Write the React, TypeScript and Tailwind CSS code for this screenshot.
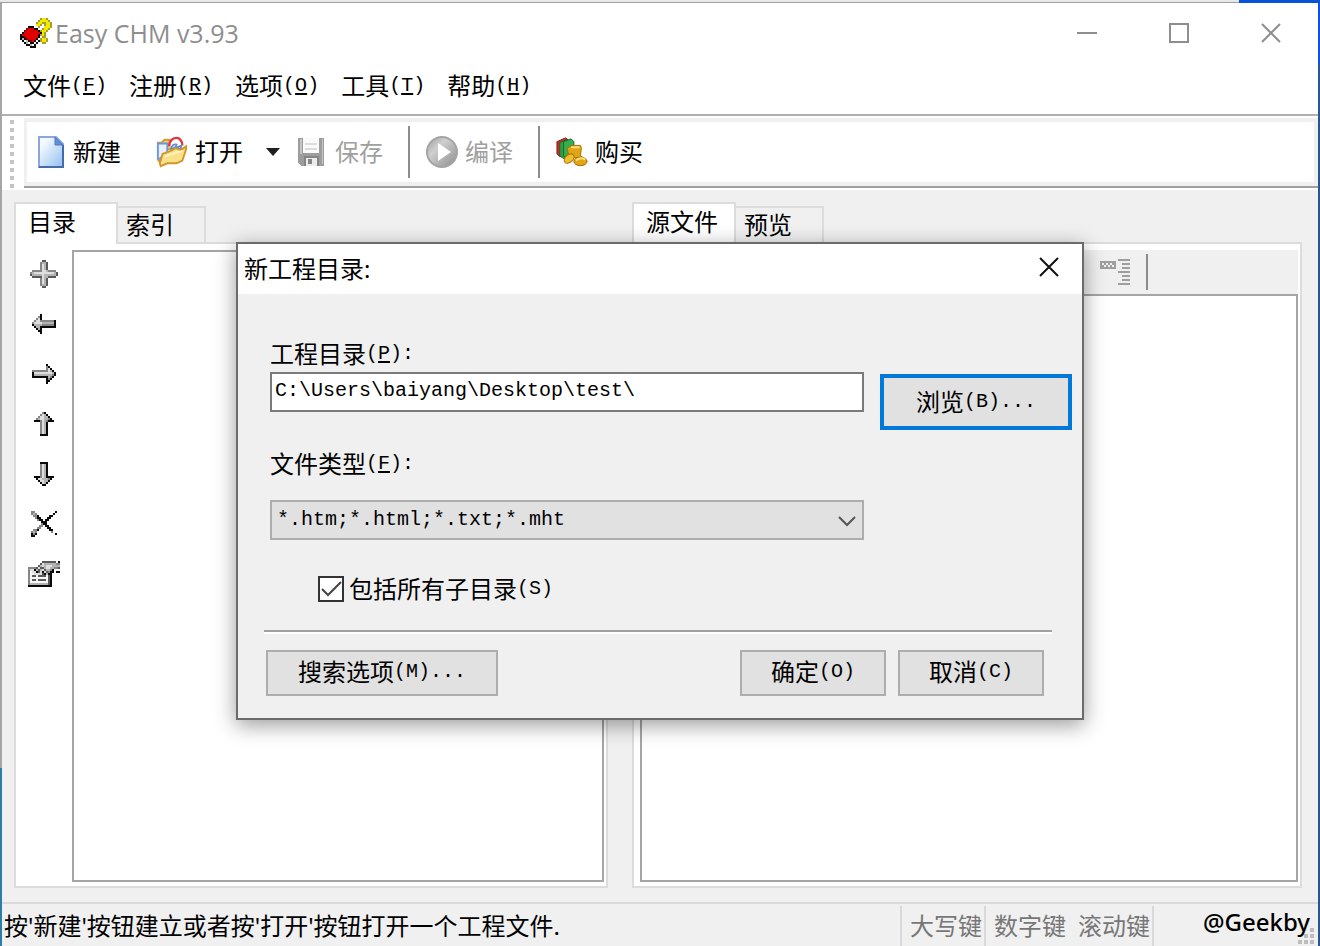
import { useState } from "react"
import type { ReactNode } from "react"
import { clsx } from "clsx"

const palette: Record<string, string> = {
  k: "#0a0a0a",
  d: "#5a5a5a",
  g: "#868686",
  m: "#b4b4b4",
  l: "#dedede",
  w: "#f8f8f8",
  r: "#e00000",
  b: "#8c0000",
  y: "#f2ea00",
  o: "#a39f2a",
}

// Draws a small bitmap, one character per cell, each cell 2px wide
function PixelIcon({ rows }: { rows: string[] }) {
  const width = Math.max(...rows.map((row) => row.length))
  return (
    <svg
      width={width * 2}
      height={rows.length * 2}
      viewBox={`0 0 ${width} ${rows.length}`}
      shapeRendering="crispEdges"
      aria-hidden="true"
    >
      {rows.map((row, y) =>
        row.split("").map((cell, x) =>
          palette[cell] ? <rect key={`${x}-${y}`} x={x} y={y} width="1" height="1" fill={palette[cell]} /> : null,
        ),
      )}
    </svg>
  )
}

const appIcon = [
  "..........oyyo..",
  ".........oyyyyo.",
  "........oyyooyyo",
  "........yyo.oyyo",
  "....kkk..o..yyyo",
  "...brrrkk..oyyo.",
  "..brrrrrrkoyyo..",
  ".krrrrrrrrkyo...",
  "krrrrrrrrkoyo...",
  "kkbrrrrrrk.oo...",
  "kmkbrrrrkwoyyo..",
  ".kwmkbrkwkoyyo..",
  "..kmwkkwk..oo...",
  "...kkmwk........",
  ".....kkk........",
]

const treeTools = [
  {
    label: "添加",
    rows: [
      "......dd......",
      ".....gmmd.....",
      ".....glmd.....",
      ".....glmd.....",
      ".....glmd.....",
      ".gggggllmgggg.",
      "gmllllllllllmd",
      "dmmmmmlmmmmmmd",
      ".dddddlmmdddd.",
      ".....glmd.....",
      ".....glmd.....",
      ".....glmd.....",
      ".....gmmd.....",
      "......dd......",
    ],
  },
  {
    label: "左移",
    rows: [
      "....k.......",
      "...gk.......",
      "..glk.......",
      ".gllgggggggk",
      "gllllmmmmmmk",
      "kmmmmggggggk",
      ".kmmkkkkkkkk",
      "..kmk.......",
      "...kk.......",
      "....k.......",
    ],
  },
  {
    label: "右移",
    rows: [
      ".......k....",
      ".......gk...",
      ".......glk..",
      "gggggggglmk.",
      "klllllllllmk",
      "kmmmmmmmmmgk",
      "kkkkkkkkmgk.",
      ".......kgk..",
      ".......kk...",
      ".......k....",
    ],
  },
  {
    label: "上移",
    rows: [
      "....gk....",
      "...glmk...",
      "..gllmmk..",
      ".gmllmmgk.",
      "kkkglmgkkk",
      "...glmk...",
      "...glmk...",
      "...glmk...",
      "...glmk...",
      "...glmk...",
      "...glmk...",
      "...kkkk...",
    ],
  },
  {
    label: "下移",
    rows: [
      "...kkkk...",
      "...glmk...",
      "...glmk...",
      "...glmk...",
      "...glmk...",
      "...glmk...",
      "...glmk...",
      "kkkglmkkkk",
      ".kllmmmgk.",
      "..kllmmk..",
      "...klmk...",
      "....kk....",
    ],
  },
  {
    label: "删除",
    rows: [
      "gg..........k",
      "gmg........k.",
      ".ggk.....kk..",
      "..gkk...kk...",
      "...gkk.kk....",
      ".....kkk.....",
      ".....gkk.....",
      "....gg.kk....",
      "...gg...kk...",
      ".ggk.....kk..",
      "gmg.......g..",
      "kgk.........k",
      "kk...........",
    ],
  },
  {
    label: "属性",
    rows: [
      ".......ddddddd.k",
      "......dlmmmmmmgg",
      ".....dmlmlllmmmm",
      "ggggdlddmllmmggd",
      "gllkmdmldmmgk...",
      "gwllkdlkldgkk.kk",
      "gwwlllldkmkk....",
      "gwddwddddwdk....",
      "gwwwwwwwwwdk....",
      "gwddwddddwdk....",
      "gwwwwwwwwwdk....",
      "gmmmmmmmmmdk....",
      "kkkkkkkkkkkk....",
    ],
  },
]

function NewIcon() {
  return (
    <svg width="32" height="32" viewBox="0 0 32 32" aria-hidden="true">
      <defs>
        <linearGradient id="page" x1="0" y1="0" x2="1" y2="1">
          <stop offset="0.2" stopColor="#f4f9ff" />
          <stop offset="1" stopColor="#8fc0f0" />
        </linearGradient>
      </defs>
      <path d="M5 1H22L29 8V31H5Z" fill="url(#page)" stroke="#8ba6d8" strokeWidth="2" />
      <path d="M29 9V31H5" fill="none" stroke="#4a68ae" strokeWidth="2" />
      <path d="M21 1L29 9H21Z" fill="#5f8fdc" stroke="#4f78c4" />
    </svg>
  )
}

function OpenIcon() {
  return (
    <svg width="34" height="32" viewBox="0 0 34 32" aria-hidden="true">
      <path d="M2 6H6L9 3H14L17 6H26V13H10L4 27L2 24Z" fill="#f3cf6a" stroke="#d19a2e" strokeWidth="2" />
      <path d="M2 7H12V17L4 23H2Z" fill="#e6f0ff" stroke="#6e96dc" strokeWidth="2" />
      <path d="M14 10C14 3 19 1 22 1S28 4 28 9" fill="#fff" stroke="#e5333d" strokeWidth="2.5" />
      <path d="M16 12C17 8 20 7 22 8L20 12ZM22 11L27 9L26 13Z" fill="#b9d0f5" stroke="#5d86cf" strokeWidth="1.5" />
      <path d="M7 18L15 15L21 12L26 14L32 10V13L28 25L22 28H12L5 31L4 28Z" fill="#fbe08a" stroke="#cf962a" strokeWidth="2" />
      <path d="M9 21L17 18L23 16L28 15" fill="none" stroke="#fff3bd" strokeWidth="2" />
    </svg>
  )
}

function SaveIcon() {
  return (
    <svg width="32" height="32" viewBox="0 0 32 32" shapeRendering="crispEdges" aria-hidden="true">
      <path d="M2 2H28V30H6L2 27Z" fill="#9d9d9d" />
      <path d="M4 3H6V18H4ZM26 3H27V28H26Z" fill="#c6c6c6" />
      <path d="M7 2H23V17H7Z" fill="#fafafa" />
      <path d="M9 7H21V9H9ZM9 12H21V14H9Z" fill="#dcdcdc" />
      <path d="M8 20H23V30H8Z" fill="#858585" />
      <path d="M10 22H21V30H10Z" fill="#ececec" />
      <path d="M12 23H16V28H12Z" fill="#858585" />
    </svg>
  )
}

function CompileIcon() {
  return (
    <svg width="32" height="32" viewBox="0 0 32 32" aria-hidden="true">
      <defs>
        <linearGradient id="disc" x1="0" y1="0" x2="1" y2="1">
          <stop offset="0" stopColor="#9c9c9c" />
          <stop offset="0.35" stopColor="#cfcfcf" />
          <stop offset="1" stopColor="#8c8c8c" />
        </linearGradient>
      </defs>
      <circle cx="16" cy="16" r="15" fill="url(#disc)" stroke="#a4a4a4" strokeWidth="2" />
      <path d="M12 7L25 16L12 25Z" fill="#fff" />
    </svg>
  )
}

function BuyIcon() {
  return (
    <svg width="34" height="32" viewBox="0 0 34 32" aria-hidden="true">
      <path d="M1 5L10 1L13 3V18L4 21L1 18Z" fill="#cf2a2a" stroke="#8e1313" />
      <path d="M4 6L11 3L15 5V21L8 23L4 20Z" fill="#2f9e44" stroke="#146626" />
      <path d="M8 5L16 2L19 5V20L11 23L8 20Z" fill="#37ae4e" stroke="#146626" />
      <path d="M12 12L17 9H26L27 12L26 20L29 22H14Z" fill="#e0a416" stroke="#a87005" />
      <path d="M16 11H25" stroke="#ffe27a" strokeWidth="2" />
      <ellipse cx="14" cy="23" rx="6" ry="4" transform="rotate(-40 14 23)" fill="#f2bd2b" stroke="#a87005" />
      <ellipse cx="26" cy="26" rx="7" ry="4.5" fill="#e3a613" stroke="#9c6603" />
      <path d="M21 25Q26 21 31 24" fill="none" stroke="#ffe27a" strokeWidth="2" />
    </svg>
  )
}

function FormatIcon() {
  return (
    <svg width="32" height="28" viewBox="0 0 32 28" shapeRendering="crispEdges" aria-hidden="true">
      <path d="M0 3H16V11H0Z" fill="#9f9f9f" />
      <path d="M2 5h2v2h-2zM4 7h2v2h-2zM6 5h2v2h-2zM8 7h2v2h-2zM10 5h2v2h-2zM12 7h2v2h-2z" fill="#f0f0f0" />
      <path d="M18 1h12v2h-12zM22 5h8v2h-8zM22 9h8v2h-8zM18 13h12v2h-12zM22 17h8v2h-8zM22 21h8v2h-8zM18 25h12v2h-12z" fill="#9f9f9f" />
    </svg>
  )
}

// Chinese caption followed by its hot key, e.g. 文件(F)
function Caption({ text, hotkey, tail = "", underline = false }: { text: string; hotkey: string; tail?: string; underline?: boolean }) {
  return (
    <span className="inline-flex items-center whitespace-nowrap text-2xl leading-6">
      {text}
      <span className="font-['Liberation_Mono',monospace] text-xl leading-6">
        (<span className={clsx(underline && "underline decoration-2 underline-offset-2")}>{hotkey}</span>){tail}
      </span>
    </span>
  )
}

const menus = [
  ["文件", "F"],
  ["注册", "R"],
  ["选项", "O"],
  ["工具", "T"],
  ["帮助", "H"],
]

function ToolButton({ icon, label, disabled }: { icon: ReactNode; label: string; disabled?: boolean }) {
  return (
    <button type="button" disabled={disabled} className="flex items-center gap-[7px] text-2xl leading-6 disabled:text-[#a0a0a0]">
      <span className="flex w-8 justify-center">{icon}</span>
      {label}
    </button>
  )
}

function Separator() {
  return <div className="ml-[25px] mr-4 h-[52px] w-0.5 bg-[#8c8c8c]" />
}

function Toolbar() {
  return (
    <div className="flex border-b-2 border-white">
      <div className="flex w-[22px] flex-col items-center gap-1 pt-1 pr-0.5">
        {Array.from({ length: 9 }, (_, i) => (
          <span key={i} className="size-1 bg-[#c4c4c4]" />
        ))}
      </div>
      <div className="mt-0.5 flex-1 border-b-2 border-[#a0a0a0] bg-[#f0f0f0] py-1 pr-1 pl-[3px]">
        <div className="flex h-[60px] items-center bg-white pl-[7px]">
          <ToolButton icon={<NewIcon />} label="新建" />
          <div className="ml-[35px] flex items-center">
            <ToolButton icon={<OpenIcon />} label="打开" />
            <button type="button" aria-label="最近打开的文件" className="ml-[23px]">
              <svg width="14" height="8" viewBox="0 0 14 8" aria-hidden="true">
                <path d="M0 0H14L7 8Z" fill="#1e1e1e" />
              </svg>
            </button>
          </div>
          <div className="ml-4">
            <ToolButton icon={<SaveIcon />} label="保存" disabled />
          </div>
          <Separator />
          <ToolButton icon={<CompileIcon />} label="编译" disabled />
          <Separator />
          <ToolButton icon={<BuyIcon />} label="购买" />
        </div>
      </div>
    </div>
  )
}

function Tabs({ items }: { items: string[] }) {
  const [first, second] = items
  return (
    <div role="tablist" className="flex h-10 items-end text-2xl leading-6">
      <button
        type="button"
        role="tab"
        aria-selected="true"
        className="z-10 -mb-0.5 h-[42px] min-w-[104px] border-2 border-b-0 border-[#dcdcdc] bg-white pb-1 pl-3 text-left"
      >
        {first}
      </button>
      <button
        type="button"
        role="tab"
        aria-selected="false"
        className="h-9 min-w-[88px] border-2 border-b-0 border-l-0 border-[#dcdcdc] pl-2 text-left"
      >
        {second}
      </button>
    </div>
  )
}

function ContentsPane() {
  return (
    <section className="flex flex-col">
      <Tabs items={["目录", "索引"]} />
      <div className="flex flex-1 border-2 border-[#dcdcdc] bg-white pr-0.5 pb-1">
        <div className="flex w-14 flex-col pt-[5px]">
          {treeTools.map((tool) => (
            <button key={tool.label} type="button" aria-label={tool.label} className="flex h-[50px] items-center justify-center">
              <PixelIcon rows={tool.rows} />
            </button>
          ))}
        </div>
        <div className="mt-1.5 flex-1 border-2 border-[#a5a5a8]" />
      </div>
    </section>
  )
}

function SourcePane() {
  return (
    <section className="flex flex-col">
      <Tabs items={["源文件", "预览"]} />
      <div className="flex flex-1 flex-col border-2 border-[#dcdcdc] bg-white pt-1.5 pr-0.5 pb-1 pl-1.5">
        <div className="flex h-11 items-center justify-end gap-3.5 bg-[#f0f0f0] pr-[150px]">
          <button type="button" aria-label="格式" disabled>
            <FormatIcon />
          </button>
          <div className="h-9 w-0.5 bg-[#8c8c8c]" />
        </div>
        <div className="flex-1 border-2 border-[#a5a5a8]" />
      </div>
    </section>
  )
}

function StatusBar() {
  return (
    <footer className="flex h-11 border-t-2 border-[#d9d9d9] pt-0.5 text-2xl leading-10 whitespace-nowrap">
      <p className="flex-1 pl-0.5">按'新建'按钮建立或者按'打开'按钮打开一个工程文件.</p>
      <span className="border-l-2 border-[#d9d9d9] pr-0.5 pl-2 text-[#777]">大写键</span>
      <span className="border-l-2 border-[#d9d9d9] pl-2 text-[#777]">数字键</span>
      <span className="border-r-2 border-[#d9d9d9] pr-0.5 pl-3 text-[#777]">滚动键</span>
      <div className="relative w-[164px] pr-2 text-right leading-8 font-medium">
        @Geekby
        <svg className="absolute right-1 bottom-0.5" width="16" height="16" viewBox="0 0 16 16" aria-hidden="true">
          <path d="M12 0h4v4h-4zM6 6h4v4h-4zM12 6h4v4h-4zM0 12h4v4h-4zM6 12h4v4h-4zM12 12h4v4h-4z" fill="#bdbdbd" />
        </svg>
      </div>
    </footer>
  )
}

const dialogButton = "flex h-[46px] items-center justify-center border-2 border-[#adadad] bg-[#e1e1e1] pb-0.5"

function NewProjectDialog() {
  const [folder, setFolder] = useState("C:\\Users\\baiyang\\Desktop\\test\\")
  const [subfolders, setSubfolders] = useState(true)

  return (
    <div
      role="dialog"
      aria-labelledby="dialog-title"
      className="absolute inset-x-0 top-[242px] z-20 mx-auto w-[848px] border-2 border-[#6b6b6b] bg-[#f0f0f0] shadow-[0_5px_20px_rgba(0,0,0,0.4)]"
    >
      <div className="flex h-[50px] items-center justify-between bg-white pr-[23px] pl-1.5">
        <h2 id="dialog-title" className="text-2xl leading-6">
          新工程目录:
        </h2>
        <button type="button" aria-label="关闭" className="pb-1">
          <svg width="20" height="20" viewBox="0 0 20 20" aria-hidden="true">
            <path d="M1 1L19 19M19 1L1 19" stroke="#111" strokeWidth="2" />
          </svg>
        </button>
      </div>

      <div className="pt-12 pr-2 pl-8">
        <label htmlFor="folder" className="flex h-[30px] items-start">
          <Caption text="工程目录" hotkey="P" tail=":" underline />
        </label>
        <div className="flex items-start gap-4">
          <input
            id="folder"
            value={folder}
            onChange={(e) => setFolder(e.target.value)}
            className="h-10 w-[594px] border-2 border-[#7a7a7a] bg-white px-[3px] pb-1 font-['Liberation_Mono',monospace] text-xl outline-none"
          />
          <button type="button" className="mt-0.5 flex h-14 w-48 items-center justify-center border-4 border-[#0078d7] bg-[#e1e1e1]">
            <Caption text="浏览" hotkey="B" tail="..." />
          </button>
        </div>

        <label htmlFor="types" className="mt-[22px] flex h-12 items-start">
          <Caption text="文件类型" hotkey="F" tail=":" underline />
        </label>
        <div className="relative w-[594px]">
          <select
            id="types"
            className="block h-10 w-full appearance-none border-2 border-[#adadad] bg-[#e1e1e1] px-[5px] font-['Liberation_Mono',monospace] text-xl outline-none"
          >
            <option>*.htm;*.html;*.txt;*.mht</option>
          </select>
          <svg className="pointer-events-none absolute top-4 right-2" width="18" height="11" viewBox="0 0 18 11" aria-hidden="true">
            <path d="M1 1L9 9L17 1" fill="none" stroke="#555" strokeWidth="2" />
          </svg>
        </div>

        <label className="mt-9 ml-12 flex items-center gap-[5px]">
          <span className="relative size-[26px]">
            <input
              type="checkbox"
              checked={subfolders}
              onChange={(e) => setSubfolders(e.target.checked)}
              className="peer block size-[26px] appearance-none border-2 border-[#333] bg-white"
            />
            <svg className="pointer-events-none absolute inset-0 hidden peer-checked:block" width="26" height="26" viewBox="0 0 26 26" aria-hidden="true">
              <path d="M4 13L10 19L23 6" fill="none" stroke="#444" strokeWidth="2" />
            </svg>
          </span>
          <Caption text="包括所有子目录" hotkey="S" />
        </label>
      </div>

      <div className="mt-7 mr-[30px] ml-[26px] border-t-2 border-b-2 border-t-[#a0a0a0] border-b-white" />

      <div className="flex gap-3 pt-4 pr-[38px] pb-[22px] pl-7">
        <button type="button" className={clsx(dialogButton, "mr-auto w-[232px]")}>
          <Caption text="搜索选项" hotkey="M" tail="..." />
        </button>
        <button type="button" className={clsx(dialogButton, "w-[146px]")}>
          <Caption text="确定" hotkey="O" />
        </button>
        <button type="button" className={clsx(dialogButton, "w-[146px]")}>
          <Caption text="取消" hotkey="C" />
        </button>
      </div>
    </div>
  )
}

function TitleBar() {
  return (
    <header className="flex h-[61px] items-center justify-between bg-white pr-[37px] pb-0.5 pl-[18px] text-[#8e8e8e]">
      <div className="flex items-center gap-[3px]">
        <PixelIcon rows={appIcon} />
        <h1 className="font-['Open_Sans','Noto_Sans',sans-serif] text-[25px] leading-8">Easy CHM v3.93</h1>
      </div>
      <div className="flex items-center gap-[72px]">
        <button type="button" aria-label="最小化">
          <svg width="20" height="20" viewBox="0 0 20 20" aria-hidden="true">
            <path d="M0 10H20" stroke="currentColor" strokeWidth="2" />
          </svg>
        </button>
        <button type="button" aria-label="最大化">
          <svg width="20" height="20" viewBox="0 0 20 20" aria-hidden="true">
            <path d="M1 1H19V19H1Z" fill="none" stroke="currentColor" strokeWidth="2" />
          </svg>
        </button>
        <button type="button" aria-label="关闭窗口">
          <svg width="20" height="20" viewBox="0 0 20 20" aria-hidden="true">
            <path d="M1 1L19 19M19 1L1 19" stroke="currentColor" strokeWidth="2" />
          </svg>
        </button>
      </div>
    </header>
  )
}

export default function App() {
  return (
    <div className="relative flex min-h-screen flex-col bg-[#f0f0f0] font-['Noto_Sans','Noto_Sans_CJK_SC',sans-serif] text-black">
      {/* Desktop showing above the window */}
      <div className="flex h-[3px] justify-end">
        <div className="flex-1 border-b border-[#a0a0a0] bg-[#e8e8e8]" />
        <div className="w-[81px] bg-[#0753d8]" />
      </div>

      <div className="flex flex-1">
        <div className="flex w-0.5 flex-col">
          <div className="h-[765px] bg-[#a6a6a6]" />
          <div className="flex-1 bg-[#2b7ea8]" />
        </div>

        <div className="flex min-w-0 flex-1 flex-col">
          <TitleBar />
          <nav className="flex h-[52px] gap-[22px] border-b-2 border-[#b0b0b0] bg-white pt-2.5 pl-[21px]">
            {menus.map(([text, hotkey]) => (
              <button key={hotkey} type="button" className="flex h-6 items-center">
                <Caption text={text} hotkey={hotkey} underline />
              </button>
            ))}
          </nav>
          <div className="bg-white">
            <Toolbar />
          </div>
          <main className="grid flex-1 grid-cols-[594fr_670fr] gap-6 pt-3 pr-4 pb-3.5 pl-3">
            <ContentsPane />
            <SourcePane />
          </main>
          <StatusBar />
        </div>

        <div className="flex w-0.5 flex-col">
          <div className="h-[61px] bg-[#0753e8]" />
          <div className="flex-1 bg-[#2a5595]" />
        </div>
      </div>

      <NewProjectDialog />
    </div>
  )
}
